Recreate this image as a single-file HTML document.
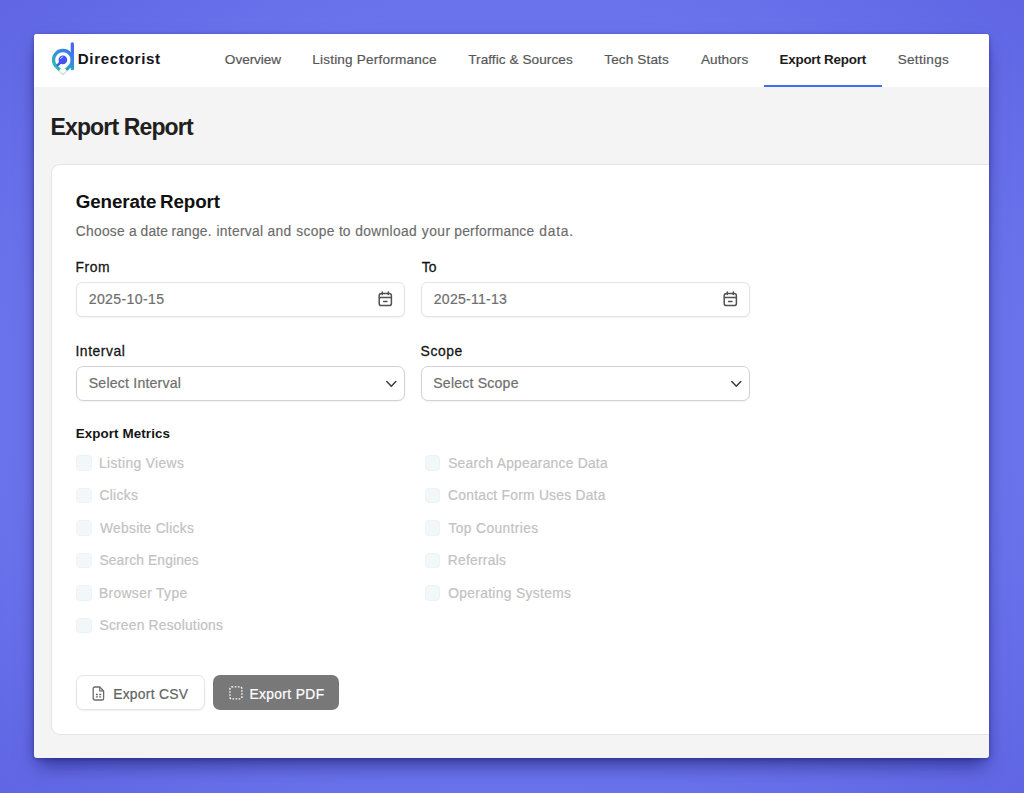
<!DOCTYPE html>
<html>
<head>
<meta charset="utf-8">
<title>Export Report</title>
<style>
*{box-sizing:border-box;margin:0;padding:0}
html,body{width:1024px;height:793px;overflow:hidden}
body{font-family:"Liberation Sans",sans-serif;background:radial-gradient(ellipse 72% 72% at 50% 50%,#6b73ec 0%,#6b73ec 68%,#5f65e3 100%);position:relative;color:#1a1a1a}
#shadow{position:absolute;left:34.2px;top:34.2px;width:955.2px;height:723.6px;border-radius:3px;box-shadow:0 1px 4px rgba(10,10,80,.35),0 11px 18px -4px rgba(10,10,80,.55)}
#win{position:absolute;left:34.2px;top:34.2px;width:955.2px;height:723.6px;background:#f4f4f4;border-radius:3px;overflow:hidden}
#in{position:absolute;left:-34.2px;top:-34.2px;width:1024px;height:793px}
#nav{position:absolute;left:34px;top:34px;width:960px;height:53.3px;background:#fff}
#ul{position:absolute;left:764.2px;top:85px;width:117.8px;height:2.3px;background:#3f6ff0}
#card{position:absolute;left:51px;top:164px;width:1000px;height:571px;background:#fff;border:1px solid #e4e4e4;border-radius:9px}
.t{position:absolute;white-space:nowrap;line-height:20px}
.inp{position:absolute;width:329px;height:35px;border:1px solid #e3e3e3;border-radius:6px;background:#fff;box-shadow:0 1px 2px rgba(0,0,0,.05)}
.sel{border-color:#d2d2d2;border-radius:7px}
.cb{position:absolute;width:15.6px;height:15.6px;border:1px solid #edf2f5;border-radius:4px;background:#f2f7fa}
.btn{position:absolute;height:35px;border-radius:7px}
svg{position:absolute;overflow:visible}
</style>
</head>
<body>
<div id="shadow"></div>
<div id="win"><div id="in">
  <div id="nav"></div>
  <div id="ul"></div>
  <svg id="logo" style="left:50px;top:40px" width="28" height="36" viewBox="0 0 28 36">
    <defs><linearGradient id="lg" gradientUnits="userSpaceOnUse" x1="4" y1="30" x2="23" y2="8"><stop offset="0" stop-color="#2bc49a"/><stop offset=".45" stop-color="#2e9bd2"/><stop offset="1" stop-color="#4668f6"/></linearGradient></defs>
    <path d="M19.45 26.65 A9.4 9.4 0 1 0 6.35 26.65 L12.9 33.0 Z" fill="none" stroke="url(#lg)" stroke-width="3.3" stroke-linejoin="round"/>
    <path d="M22.35 3.95 V28.65" fill="none" stroke="url(#lg)" stroke-width="3.3" stroke-linecap="round"/>
    <path d="M9.6 30.0 L12.9 33.0 L16.2 30.0" fill="none" stroke="#e6e6e6" stroke-width="3.4" stroke-linejoin="round" stroke-linecap="butt"/>
    <path d="M10.2 29.5 L12.9 32.0 L15.6 29.5" fill="none" stroke="#fff" stroke-width="1.8" stroke-linejoin="round" stroke-linecap="butt"/>
    <path d="M11 21.8 L7.7 25.1" stroke="#4254f5" stroke-width="2.5" stroke-linecap="round"/>
    <circle cx="12.9" cy="19.9" r="4.3" fill="#4254f5"/>
    <path d="M10.5 18.7 A3 3 0 0 1 12.7 16.9" stroke="#dfe3ff" stroke-width=".9" fill="none" stroke-linecap="round"/>
  </svg>
  <div id="card"></div>

  <div class="inp" style="left:76px;top:282px"></div>
  <div class="inp" style="left:421px;top:282px"></div>
  <div class="inp sel" style="left:76px;top:366px"></div>
  <div class="inp sel" style="left:421px;top:366px"></div>
  <svg style="left:377.9px;top:291.3px" width="15" height="16" viewBox="0 0 15 16" fill="none" stroke="#525252" stroke-width="1.5" stroke-linecap="round" stroke-linejoin="round"><rect x="1.2" y="2.6" width="12.2" height="12" rx="2.2"/><path d="M1.500 6.600H13M4.300 1V3.400M10.300 1V3.400M5.600 10.400H9"/></svg>
  <svg style="left:722.9px;top:291.3px" width="15" height="16" viewBox="0 0 15 16" fill="none" stroke="#525252" stroke-width="1.5" stroke-linecap="round" stroke-linejoin="round"><rect x="1.2" y="2.6" width="12.2" height="12" rx="2.2"/><path d="M1.500 6.600H13M4.300 1V3.400M10.300 1V3.400M5.600 10.400H9"/></svg>
  <svg style="left:385px;top:379.7px" width="13" height="8" viewBox="0 0 13 8" fill="none" stroke="#3c3c3c" stroke-width="1.5" stroke-linecap="round" stroke-linejoin="round"><path d="M1.800 1.600L6.300 6.200L10.800 1.600"/></svg>
  <svg style="left:730px;top:379.7px" width="13" height="8" viewBox="0 0 13 8" fill="none" stroke="#3c3c3c" stroke-width="1.5" stroke-linecap="round" stroke-linejoin="round"><path d="M1.800 1.600L6.300 6.200L10.800 1.600"/></svg>

<div class="cb" style="left:76.2px;top:455.2px"></div>
<div class="cb" style="left:76.2px;top:487.6px"></div>
<div class="cb" style="left:76.2px;top:520.1px"></div>
<div class="cb" style="left:76.2px;top:552.6px"></div>
<div class="cb" style="left:76.2px;top:585.0px"></div>
<div class="cb" style="left:76.2px;top:617.5px"></div>
<div class="cb" style="left:424.8px;top:455.2px"></div>
<div class="cb" style="left:424.8px;top:487.6px"></div>
<div class="cb" style="left:424.8px;top:520.1px"></div>
<div class="cb" style="left:424.8px;top:552.6px"></div>
<div class="cb" style="left:424.8px;top:585.0px"></div>

  <div class="btn" style="left:76px;top:675.2px;width:129.3px;height:34.8px;background:#fff;border:1px solid #e5e5e5;box-shadow:0 1px 2px rgba(0,0,0,.06)"></div>
  <div class="btn" style="left:213.2px;top:675.2px;width:126px;height:34.8px;background:#787878"></div>
  <svg style="left:92.3px;top:685.8px" width="13" height="15" viewBox="0 0 13 15" fill="none" stroke="#6a6a6a" stroke-width="1.3" stroke-linejoin="round"><path d="M1.2 2.6a1.6 1.6 0 0 1 1.6-1.6h4.9l3.9 3.9v7.5a1.6 1.6 0 0 1-1.6 1.6h-7.2a1.6 1.6 0 0 1-1.6-1.600z"/><path d="M7.7 1v3.900h3.900" stroke-width="1.1"/><path d="M3.900 8.500h2M7.200 8.500h2M3.900 10.900h2M7.200 10.900h2" stroke-width="1.300"/></svg>
  <svg style="left:228.700px;top:685.800px" width="14" height="14" viewBox="0 0 14 14" fill="none" stroke="#fff" stroke-width="1.4" stroke-dasharray="1.6 1.5"><rect x="0.9" y="0.9" width="12" height="12" rx="1.800"/></svg>

<div class="t" id="brand" style="left:77.68px;top:49.00px;font-size:15.2px;font-weight:bold;color:#15151c;letter-spacing:0.653px">Directorist</div>
<div class="t" id="n1" style="left:224.86px;top:50.00px;font-size:13.6px;font-weight:normal;color:#575757;letter-spacing:-0.049px;-webkit-text-stroke:0.20px #575757">Overview</div>
<div class="t" id="n2" style="left:312.28px;top:50.00px;font-size:13.6px;font-weight:normal;color:#575757;letter-spacing:0.185px;-webkit-text-stroke:0.20px #575757">Listing Performance</div>
<div class="t" id="n3" style="left:468.19px;top:50.00px;font-size:13.6px;font-weight:normal;color:#575757;letter-spacing:0.062px;-webkit-text-stroke:0.20px #575757">Traffic &amp; Sources</div>
<div class="t" id="n4" style="left:604.29px;top:50.00px;font-size:13.6px;font-weight:normal;color:#575757;letter-spacing:0.114px;-webkit-text-stroke:0.20px #575757">Tech Stats</div>
<div class="t" id="n5" style="left:700.97px;top:50.00px;font-size:13.6px;font-weight:normal;color:#575757;letter-spacing:0.076px;-webkit-text-stroke:0.20px #575757">Authors</div>
<div class="t" id="n6" style="left:779.50px;top:50.00px;font-size:13.4px;font-weight:bold;color:#1c1c1c;letter-spacing:-0.218px">Export Report</div>
<div class="t" id="n7" style="left:897.68px;top:50.00px;font-size:13.6px;font-weight:normal;color:#575757;letter-spacing:0.283px;-webkit-text-stroke:0.20px #575757">Settings</div>
<div class="t" id="title1" style="left:50.46px;top:117.00px;font-size:23px;font-weight:bold;color:#202020;letter-spacing:-0.845px">Export</div>
<div class="t" id="title2" style="left:123.66px;top:117.00px;font-size:23px;font-weight:bold;color:#202020;letter-spacing:-0.841px">Report</div>
<div class="t" id="h2a" style="left:75.63px;top:192.00px;font-size:18.8px;font-weight:bold;color:#101010;letter-spacing:-0.089px">Generate</div>
<div class="t" id="h2b" style="left:159.94px;top:192.00px;font-size:18.8px;font-weight:bold;color:#101010;letter-spacing:-0.069px">Report</div>
<div class="t" id="d0" style="left:75.87px;top:222.00px;font-size:13.8px;font-weight:normal;color:#6b6b6b;letter-spacing:0.240px;-webkit-text-stroke:0.15px #6b6b6b">Choose</div>
<div class="t" id="d1" style="left:129.11px;top:222.00px;font-size:13.8px;font-weight:normal;color:#6b6b6b;letter-spacing:0.000px;-webkit-text-stroke:0.15px #6b6b6b">a</div>
<div class="t" id="d2" style="left:140.60px;top:222.00px;font-size:13.8px;font-weight:normal;color:#6b6b6b;letter-spacing:0.128px;-webkit-text-stroke:0.15px #6b6b6b">date</div>
<div class="t" id="d3" style="left:171.46px;top:222.00px;font-size:13.8px;font-weight:normal;color:#6b6b6b;letter-spacing:0.200px;-webkit-text-stroke:0.15px #6b6b6b">range.</div>
<div class="t" id="d4" style="left:216.45px;top:222.00px;font-size:13.8px;font-weight:normal;color:#6b6b6b;letter-spacing:0.302px;-webkit-text-stroke:0.15px #6b6b6b">interval</div>
<div class="t" id="d5" style="left:267.59px;top:222.00px;font-size:13.8px;font-weight:normal;color:#6b6b6b;letter-spacing:0.297px;-webkit-text-stroke:0.15px #6b6b6b">and</div>
<div class="t" id="d6" style="left:296.19px;top:222.00px;font-size:13.8px;font-weight:normal;color:#6b6b6b;letter-spacing:0.355px;-webkit-text-stroke:0.15px #6b6b6b">scope</div>
<div class="t" id="d7" style="left:338.98px;top:222.00px;font-size:13.8px;font-weight:normal;color:#6b6b6b;letter-spacing:0.000px;-webkit-text-stroke:0.15px #6b6b6b">to</div>
<div class="t" id="d8" style="left:355.20px;top:222.00px;font-size:13.8px;font-weight:normal;color:#6b6b6b;letter-spacing:0.363px;-webkit-text-stroke:0.15px #6b6b6b">download</div>
<div class="t" id="d9" style="left:421.74px;top:222.00px;font-size:13.8px;font-weight:normal;color:#6b6b6b;letter-spacing:0.523px;-webkit-text-stroke:0.15px #6b6b6b">your</div>
<div class="t" id="d10" style="left:454.29px;top:222.00px;font-size:13.8px;font-weight:normal;color:#6b6b6b;letter-spacing:0.240px;-webkit-text-stroke:0.15px #6b6b6b">performance</div>
<div class="t" id="d11" style="left:539.30px;top:222.00px;font-size:13.8px;font-weight:normal;color:#6b6b6b;letter-spacing:0.751px;-webkit-text-stroke:0.15px #6b6b6b">data.</div>
<div class="t" id="lf" style="left:75.60px;top:257.00px;font-size:13.9px;font-weight:normal;color:#151515;letter-spacing:0.518px;-webkit-text-stroke:0.28px #151515">From</div>
<div class="t" id="lt" style="left:421.70px;top:257.00px;font-size:13.9px;font-weight:normal;color:#151515;letter-spacing:0.000px;-webkit-text-stroke:0.28px #151515">To</div>
<div class="t" id="vf" style="left:88.69px;top:289.00px;font-size:14.1px;font-weight:normal;color:#6e6e6e;letter-spacing:0.356px;-webkit-text-stroke:0.20px #6e6e6e">2025-10-15</div>
<div class="t" id="vt" style="left:433.79px;top:289.00px;font-size:14.1px;font-weight:normal;color:#6e6e6e;letter-spacing:0.220px;-webkit-text-stroke:0.20px #6e6e6e">2025-11-13</div>
<div class="t" id="li" style="left:75.46px;top:341.00px;font-size:13.9px;font-weight:normal;color:#151515;letter-spacing:0.553px;-webkit-text-stroke:0.28px #151515">Interval</div>
<div class="t" id="ls" style="left:420.61px;top:341.00px;font-size:13.9px;font-weight:normal;color:#151515;letter-spacing:0.570px;-webkit-text-stroke:0.28px #151515">Scope</div>
<div class="t" id="vi" style="left:88.76px;top:373.00px;font-size:14.1px;font-weight:normal;color:#6e6e6e;letter-spacing:0.205px;-webkit-text-stroke:0.20px #6e6e6e">Select Interval</div>
<div class="t" id="vs" style="left:433.26px;top:373.00px;font-size:14.1px;font-weight:normal;color:#6e6e6e;letter-spacing:0.200px;-webkit-text-stroke:0.20px #6e6e6e">Select Scope</div>
<div class="t" id="lm" style="left:75.70px;top:424.00px;font-size:13.4px;font-weight:bold;color:#151515;letter-spacing:0.095px">Export Metrics</div>
<div class="t" id="bc" style="left:113.16px;top:684.00px;font-size:13.9px;font-weight:normal;color:#636363;letter-spacing:0.247px;-webkit-text-stroke:0.20px #636363">Export CSV</div>
<div class="t" id="bp" style="left:249.38px;top:685.00px;font-size:13.8px;font-weight:normal;color:#ffffff;letter-spacing:0.384px;-webkit-text-stroke:0.22px #ffffff">Export PDF</div>
<div class="t" id="cl0" style="left:98.97px;top:454.00px;font-size:13.8px;font-weight:normal;color:#c2c2c2;letter-spacing:0.379px;-webkit-text-stroke:0.20px #c2c2c2">Listing Views</div>
<div class="t" id="cl1" style="left:99.40px;top:486.00px;font-size:13.8px;font-weight:normal;color:#c2c2c2;letter-spacing:0.341px;-webkit-text-stroke:0.20px #c2c2c2">Clicks</div>
<div class="t" id="cl2" style="left:100.04px;top:519.00px;font-size:13.8px;font-weight:normal;color:#c2c2c2;letter-spacing:0.272px;-webkit-text-stroke:0.20px #c2c2c2">Website Clicks</div>
<div class="t" id="cl3" style="left:99.47px;top:551.00px;font-size:13.8px;font-weight:normal;color:#c2c2c2;letter-spacing:0.139px;-webkit-text-stroke:0.20px #c2c2c2">Search Engines</div>
<div class="t" id="cl4" style="left:98.97px;top:584.00px;font-size:13.8px;font-weight:normal;color:#c2c2c2;letter-spacing:0.367px;-webkit-text-stroke:0.20px #c2c2c2">Browser Type</div>
<div class="t" id="cl5" style="left:99.47px;top:616.00px;font-size:13.8px;font-weight:normal;color:#c2c2c2;letter-spacing:0.223px;-webkit-text-stroke:0.20px #c2c2c2">Screen Resolutions</div>
<div class="t" id="cr0" style="left:448.17px;top:454.00px;font-size:13.8px;font-weight:normal;color:#c2c2c2;letter-spacing:0.250px;-webkit-text-stroke:0.20px #c2c2c2">Search Appearance Data</div>
<div class="t" id="cr1" style="left:448.10px;top:486.00px;font-size:13.8px;font-weight:normal;color:#c2c2c2;letter-spacing:0.261px;-webkit-text-stroke:0.20px #c2c2c2">Contact Form Uses Data</div>
<div class="t" id="cr2" style="left:448.49px;top:519.00px;font-size:13.8px;font-weight:normal;color:#c2c2c2;letter-spacing:0.381px;-webkit-text-stroke:0.20px #c2c2c2">Top Countries</div>
<div class="t" id="cr3" style="left:447.67px;top:551.00px;font-size:13.8px;font-weight:normal;color:#c2c2c2;letter-spacing:0.293px;-webkit-text-stroke:0.20px #c2c2c2">Referrals</div>
<div class="t" id="cr4" style="left:448.15px;top:584.00px;font-size:13.8px;font-weight:normal;color:#c2c2c2;letter-spacing:0.339px;-webkit-text-stroke:0.20px #c2c2c2">Operating Systems</div>
</div></div>
</body>
</html>
